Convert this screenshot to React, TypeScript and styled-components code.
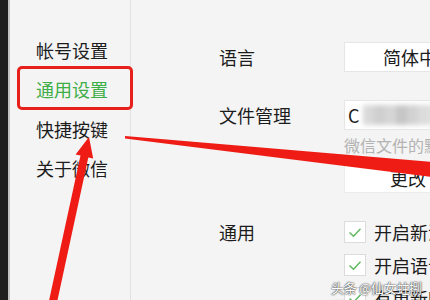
import React from "react";
import styled, { createGlobalStyle } from "styled-components";

const Global = createGlobalStyle`
  html, body { margin: 0; padding: 0; background: #f4f4f4; }
  body { font-family: "Noto Sans CJK SC", "Noto Sans", sans-serif; }
`;

const Window = styled.div`
  position: relative;
  width: 430px;
  height: 300px;
  overflow: hidden;
  display: flex;
  background: #f4f4f4;
  color: #1c1c1c;
`;

const DarkEdge = styled.div`
  width: 8px;
  flex: none;
  background: #1f1f1f;
  border-right: 2px solid #c4c4c4;
`;

const Sidebar = styled.nav`
  width: 121px;
  flex: none;
  border-right: 1px solid #e2e2e2;
  padding-top: 31px;
  display: flex;
  flex-direction: column;
  box-sizing: border-box;
`;

const MenuItem = styled.div<{ $active?: boolean }>`
  position: relative;
  padding-left: 26px;
  height: 39.3px;
  line-height: 39px;
  font-size: 18px;
  color: ${(p) => (p.$active ? "#3eae47" : "#1c1c1c")};
  white-space: nowrap;
`;

const Highlight = styled.span`
  position: absolute;
  left: 7px;
  top: -4px;
  width: 116px;
  height: 44px;
  box-sizing: border-box;
  border: 3px solid #e8201c;
  border-radius: 5px;
`;

const Content = styled.main`
  flex: 1;
  padding-left: 88px;
  display: flex;
  flex-direction: column;
  white-space: nowrap;
`;

const Row = styled.div<{ $top: number }>`
  display: grid;
  grid-template-columns: 125px 1fr;
  margin-top: ${(p) => p.$top}px;
`;

const Label = styled.div<{ $lh: number }>`
  font-size: 18px;
  line-height: ${(p) => p.$lh}px;
`;

const Controls = styled.div`
  display: flex;
  flex-direction: column;
`;

const Field = styled.div<{ $align?: string }>`
  position: relative;
  width: 150px;
  height: 30px;
  box-sizing: border-box;
  background: #ffffff;
  border: 1px solid #e6e6e6;
  font-size: 18px;
  line-height: 28px;
  display: flex;
  justify-content: ${(p) => p.$align || "flex-start"};
  padding-left: ${(p) => (p.$align === "center" ? "0" : "3px")};
  overflow: hidden;
`;

const Mosaic = styled.div`
  display: flex;
  margin-left: 4px;
  margin-top: 4px;
  filter: blur(2.5px);
`;

const Tile = styled.span<{ $c: string }>`
  width: 11px;
  height: 20px;
  background: ${(p) => p.$c};
`;

const Hint = styled.div`
  margin-top: 5px;
  font-size: 16px;
  line-height: 20px;
  color: #b3b3b3;
`;

const Button = styled(Field)`
  margin-top: 8px;
  width: 128px;
  border-color: #ececec;
`;

const CheckList = styled.div`
  display: flex;
  flex-direction: column;
  gap: 11px;
`;

const CheckRow = styled.div`
  display: flex;
  align-items: center;
  gap: 8px;
  font-size: 18px;
  line-height: 22px;
`;

const Box = styled.span`
  width: 22px;
  height: 22px;
  box-sizing: border-box;
  background: #fff;
  border: 1px solid #dcdcdc;
  display: flex;
  align-items: center;
  justify-content: center;
  flex: none;
`;

const Watermark = styled.div`
  position: absolute;
  left: 331px;
  top: 278px;
  font-size: 13px;
  color: #ffffff;
  text-shadow: 0 0 2px #333, 0 0 1px #333;
  letter-spacing: -0.3px;
`;

const Overlay = styled.svg`
  position: absolute;
  left: 0;
  top: 0;
  pointer-events: none;
`;

const Check = () => (
  <svg width="14" height="11" viewBox="0 0 14 11">
    <path d="M1.5 5.5 L5.5 9.2 L12.5 1.8" fill="none" stroke="#5cb85c" strokeWidth="1.4" />
  </svg>
);

const tiles = ["#d9d9d9", "#cfcfcf", "#d6d6d6", "#c6c6c6", "#d2d2d2", "#dcdcdc", "#e2e2e2"];

export default function App() {
  return (
    <>
      <Global />
      <Window>
        <DarkEdge />
        <Sidebar>
          <MenuItem>帐号设置</MenuItem>
          <MenuItem $active>
            通用设置
            <Highlight />
          </MenuItem>
          <MenuItem>快捷按键</MenuItem>
          <MenuItem>关于微信</MenuItem>
        </Sidebar>
        <Content>
          <Row $top={42}>
            <Label $lh={30}>语言</Label>
            <Field $align="center">简体中文</Field>
          </Row>
          <Row $top={28}>
            <Label $lh={30}>文件管理</Label>
            <Controls>
              <Field>
                C
                <Mosaic>
                  {tiles.map((c, i) => (
                    <Tile key={i} $c={c} />
                  ))}
                </Mosaic>
              </Field>
              <Hint>微信文件的默认保存位置</Hint>
              <Button $align="center">更改</Button>
            </Controls>
          </Row>
          <Row $top={28}>
            <Label $lh={22}>通用</Label>
            <CheckList>
              <CheckRow>
                <Box><Check /></Box>开启新消息提醒声音
              </CheckRow>
              <CheckRow>
                <Box><Check /></Box>开启语音和视频通话提醒声音
              </CheckRow>
              <CheckRow>
                <Box><Check /></Box>有更新时自动升级微信
              </CheckRow>
            </CheckList>
          </Row>
        </Content>
        <Overlay width="430" height="300" viewBox="0 0 430 300">
          <polygon points="125,136 125,138.5 432,177 432,162" fill="#ee1c14" />
          <polygon
            points="89,137 75.6,154.5 80.5,155.6 47,310 55,311.8 88.3,157.4 93.2,158.6"
            fill="#ee1c14"
          />
        </Overlay>
        <Watermark>头条 @仙女蛀捌捌</Watermark>
      </Window>
    </>
  );
}
